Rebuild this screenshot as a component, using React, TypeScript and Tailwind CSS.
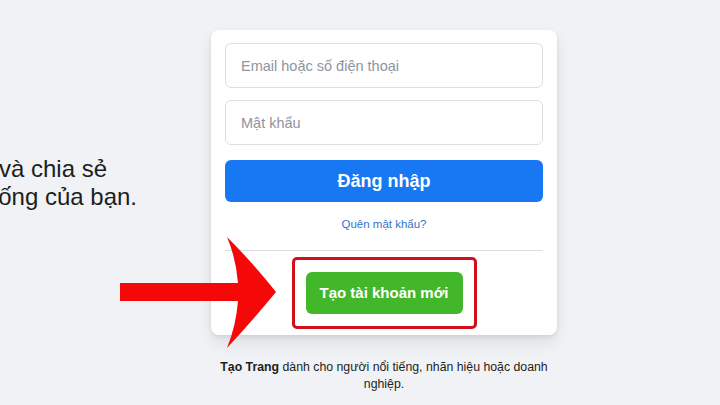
export default function App() {
  return (
    <div className="relative h-[405px] w-[720px] overflow-hidden bg-[#f0f2f5] font-['Liberation_Sans',Arial,sans-serif] text-[#1c1e21]">
      <div className="flex items-start">
        {/* tagline, cut off at the left edge of the shot */}
        <div className="mt-[155px] w-[137px] shrink-0 overflow-hidden text-[24px] leading-[28px]">
          <div className="flex justify-end pr-[30px]">
            <span className="shrink-0 whitespace-nowrap">Facebook giúp bạn kết nối và chia sẻ</span>
          </div>
          <div className="flex justify-end">
            <span className="shrink-0 whitespace-nowrap">với mọi người trong cuộc sống của bạn.</span>
          </div>
        </div>

        <div className="ml-[74px] mt-[30px] w-[346px] shrink-0">
          {/* login card */}
          <div className="rounded-lg bg-white px-[14px] pb-[6px] pt-[13px] shadow-[0_2px_4px_rgba(0,0,0,0.08),0_8px_16px_rgba(0,0,0,0.08)]">
            <input
              placeholder="Email hoặc số điện thoại"
              className="block h-[45px] w-full rounded-md border border-[#dddfe2] px-[15px] text-[14.5px] outline-none placeholder:text-[#90949c]"
            />
            <input
              type="password"
              placeholder="Mật khẩu"
              className="mt-3 block h-[45px] w-full rounded-md border border-[#dddfe2] px-[15px] text-[14.5px] outline-none placeholder:text-[#90949c]"
            />
            <button className="mt-[15px] block h-[42px] w-full rounded-md bg-[#1877f2] text-[18px] font-bold text-white">
              Đăng nhập
            </button>
            <div className="mt-[14px] text-center text-[11.5px] leading-4 text-[#3572c9]">Quên mật khẩu?</div>
            <div className="mt-[18px] border-t border-[#dadde1]" />

            {/* highlighted create-account button */}
            <div className="mt-[6px] flex justify-center">
              <div className="rounded-[5px] border-[3px] border-[#d2101c] px-[11px] py-[12px]">
                <button className="block h-[42px] w-[157px] rounded-md bg-[#42b72a] text-[15px] font-bold text-white">
                  Tạo tài khoản mới
                </button>
              </div>
            </div>
          </div>

          <p className="mt-[24px] text-center text-[12.3px] leading-[17px]">
            <span className="font-bold">Tạo Trang</span> dành cho người nổi tiếng, nhãn hiệu hoặc doanh nghiệp.
          </p>
        </div>
      </div>

      {/* red pointer arrow */}
      <svg className="absolute left-[115px] top-[230px] h-[125px] w-[170px]" viewBox="0 0 170 125">
        <path
          d="M5 53 L123 53 Q121 28 112 7 Q138 33 161 62 Q138 90 112 118 Q121 96 123 71 L5 71 Z"
          fill="#f50808"
        />
      </svg>
    </div>
  );
}
